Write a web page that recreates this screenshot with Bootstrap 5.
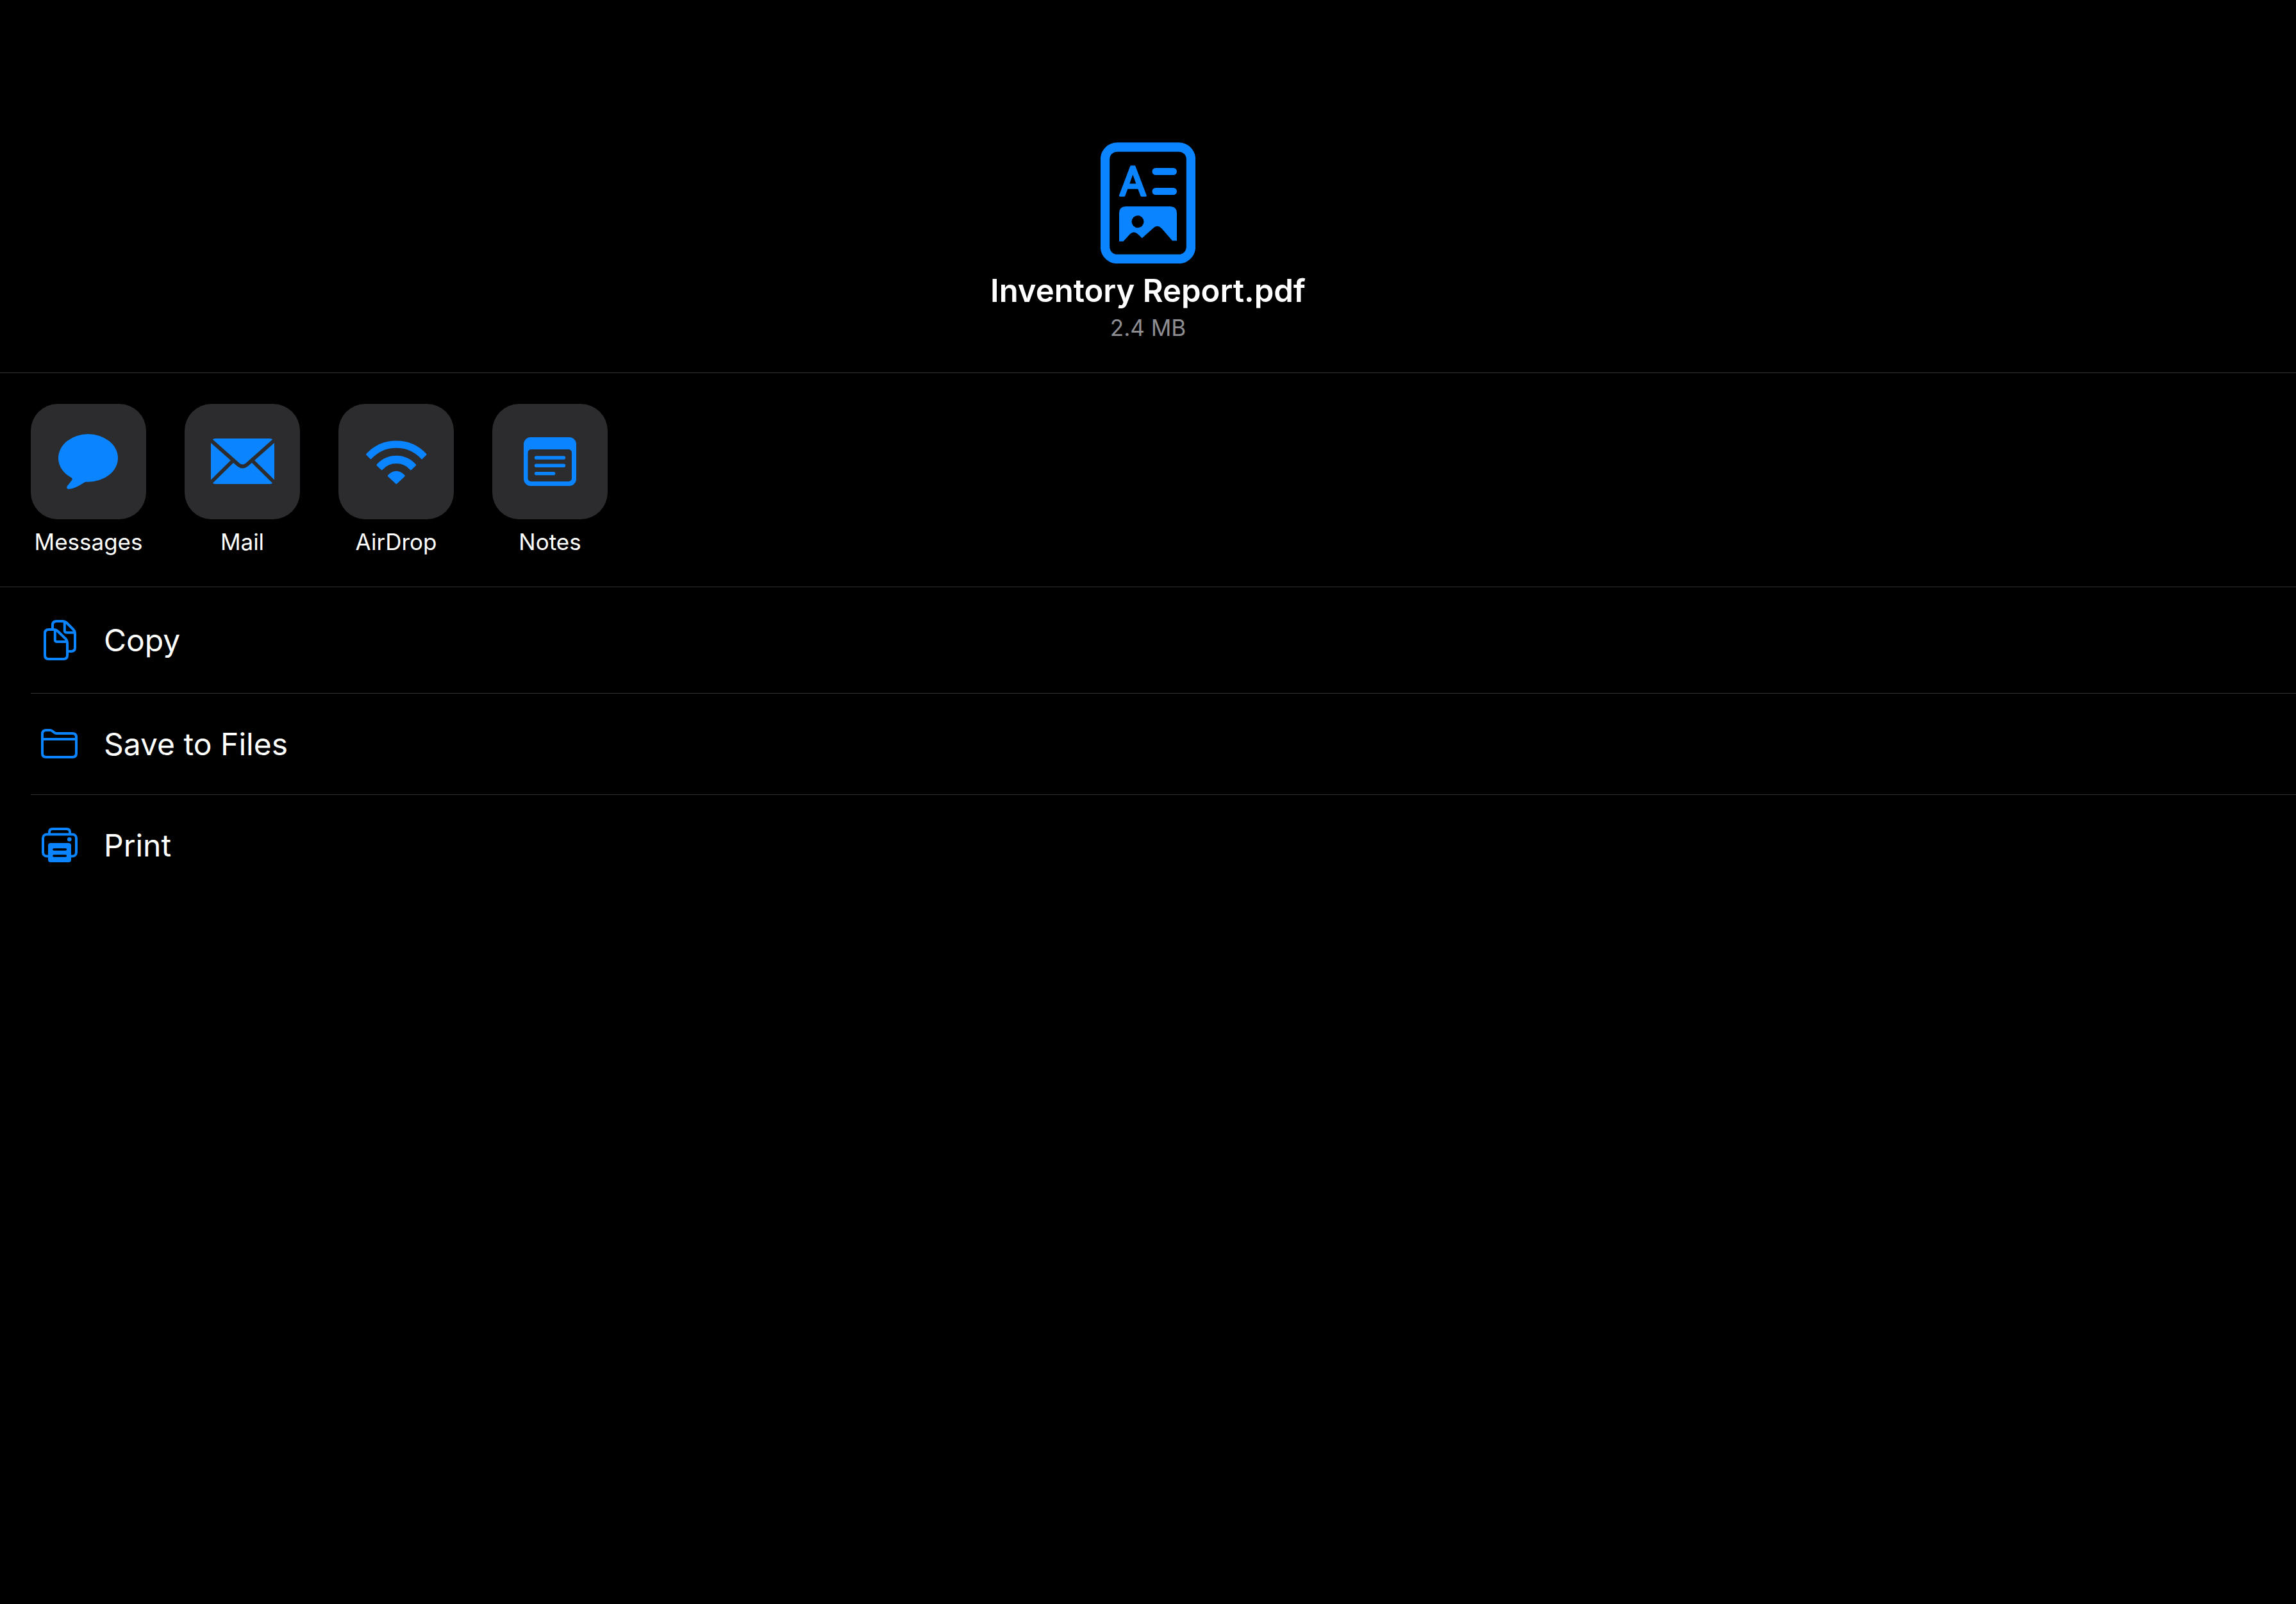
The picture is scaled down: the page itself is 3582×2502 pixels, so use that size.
<!DOCTYPE html>
<html lang="en" data-bs-theme="dark">
<head>
<meta charset="utf-8">
<meta name="viewport" content="width=device-width, initial-scale=1">
<title>Share Inventory Report.pdf</title>
<link href="https://cdn.jsdelivr.net/npm/bootstrap@5.3.0/dist/css/bootstrap.min.css" rel="stylesheet">
<style>
  :root { --accent: #0a84ff; --tile: #2c2c2e; --hairline: #323235; --pad: 48px; }
  body { background: #000; color: #fff; font-family: Inter, "Liberation Sans", sans-serif; }
  svg { display: block; flex: none; }
  .file-head { padding: 222px var(--pad) var(--pad); border-bottom: 1px solid var(--hairline); }
  .file-name { font-size: 49px; line-height: 60px; font-weight: 600; margin: 13px 0 5px; }
  .file-size { font-size: 35px; line-height: 44px; color: #8e8e93; margin: 0; }
  .share-apps { padding: var(--pad); gap: 60px; border-bottom: 1px solid var(--hairline); }
  .app-btn { width: 180px; font-size: 35px; line-height: 44px; gap: 13px; color: #fff; }
  .app-tile { width: 180px; height: 180px; border-radius: 42px; background: var(--tile); }
  .actions { padding-left: var(--pad); }
  .actions li + li { border-top: 1px solid var(--hairline); }
  .action-btn { padding: var(--pad) 0; gap: 24px; font-size: 48px; line-height: 61px; color: #fff; }
  .outline { fill: none; stroke: var(--accent); stroke-width: 4; stroke-linejoin: round; stroke-linecap: butt; }
  .solid { fill: var(--accent); }
</style>
</head>
<body>
<header class="file-head d-flex flex-column align-items-center text-center">
  <svg width="148" height="189" viewBox="0 0 148 189" aria-hidden="true">
    <rect x="7" y="7.500" width="134" height="174.500" rx="19" fill="none" stroke="#0a84ff" stroke-width="14.300"/>
    <text x="50.300" y="83" text-anchor="middle" font-family="Roboto, sans-serif" font-size="63" font-weight="400" fill="#0a84ff" stroke="#0a84ff" stroke-width="3.500" stroke-linejoin="round">A</text>
    <path d="M86 45.500H113.500M86 76.500H113.500" fill="none" stroke="#0a84ff" stroke-width="11" stroke-linecap="round"/>
    <path class="solid" fill-rule="evenodd" d="M29 154.500V111Q29 100 40 100H108Q119 100 119 111V153.500H112L95.500 134.500Q89 127.500 82 134L64.700 149.500L58 143Q52 137.500 46 143L35.500 154.500ZM58 114.200A9.500 9.500 0 1 0 58 133.200A9.500 9.500 0 1 0 58 114.200Z"/>
  </svg>
  <h1 class="file-name">Inventory Report.pdf</h1>
  <p class="file-size">2.4 MB</p>
</header>

<nav class="share-apps d-flex flex-wrap" aria-label="Share with">
  <button type="button" class="app-btn btn p-0 border-0 d-flex flex-column align-items-center">
    <span class="app-tile">
      <svg width="180" height="180" viewBox="0 0 180 180" aria-hidden="true">
        <ellipse class="solid" cx="89.500" cy="84.400" rx="46.500" ry="37.300"/>
        <path class="solid" d="M64 116L65 117.500Q62.500 121.500 57 128Q54.500 132 59 133Q68 133 84.500 122L92 120L70 105Z"/>
      </svg>
    </span>
    <span>Messages</span>
  </button>
  <button type="button" class="app-btn btn p-0 border-0 d-flex flex-column align-items-center">
    <span class="app-tile">
      <svg width="180" height="180" viewBox="0 0 180 180" aria-hidden="true">
        <rect class="solid" x="41" y="54" width="99" height="71" rx="7"/>
        <path d="M40 56L84 95Q90.500 100 97 95L141 56M75 89L40 123.500M106 89L141 123.500" fill="none" stroke="#2c2c2e" stroke-width="5.700"/>
      </svg>
    </span>
    <span>Mail</span>
  </button>
  <button type="button" class="app-btn btn p-0 border-0 d-flex flex-column align-items-center">
    <span class="app-tile">
      <svg width="180" height="180" viewBox="0 0 180 180" aria-hidden="true">
        <path d="M44.600 78.700A62.600 62.600 0 0 1 136 78.700L130 84.600A54.200 54.200 0 0 0 50.600 84.600ZM61 95.300A39.500 39.500 0 0 1 119.600 95.300L113 101.700A30.500 30.500 0 0 0 67.600 101.700ZM78.300 112.200Q83.500 106.200 90.300 106.200T102.300 112.200L90.300 123.500Z" fill="#0a84ff" stroke="#0a84ff" stroke-width="3" stroke-linejoin="round"/>
      </svg>
    </span>
    <span>AirDrop</span>
  </button>
  <button type="button" class="app-btn btn p-0 border-0 d-flex flex-column align-items-center">
    <span class="app-tile">
      <svg width="180" height="180" viewBox="0 0 180 180" aria-hidden="true">
        <rect class="solid" x="49" y="52" width="82" height="76" rx="11"/>
        <rect x="55.500" y="71" width="68.500" height="50" rx="5" fill="#2c2c2e"/>
        <path d="M68.500 84H111.500M68.500 96.300H111.500M68.500 108.600H95.700" fill="none" stroke="#0a84ff" stroke-width="5.400" stroke-linecap="round"/>
      </svg>
    </span>
    <span>Notes</span>
  </button>
</nav>

<main>
  <ul class="actions list-unstyled mb-0">
    <li>
      <button type="button" class="action-btn btn border-0 rounded-0 w-100 d-flex align-items-center text-start">
        <svg width="90" height="69" viewBox="0 0 90 69" aria-hidden="true">
          <g class="outline">
            <path d="M34 16V11Q34 5 40 5H50Q53.500 5 56 7.500L66.500 18Q69 20.500 69 24V46Q69 52 63 52H59"/>
            <path d="M52.800 5V19.500Q52.800 22.700 56 22.700H69"/>
            <path d="M28 18H36Q39.500 18 42 20.500L54.500 32.500Q57 35 57 38.500V58Q57 64 51 64H28Q22 64 22 58V24Q22 18 28 18Z"/>
            <path d="M37.800 18V34Q37.800 37 41 37H57"/>
          </g>
        </svg>
        <span>Copy</span>
      </button>
    </li>
    <li>
      <button type="button" class="action-btn btn border-0 rounded-0 w-100 d-flex align-items-center text-start">
        <svg width="90" height="61" viewBox="0 0 90 61" aria-hidden="true">
          <g class="outline">
            <path d="M18 15Q18 9 24 9H30Q32.500 9 34.500 11L36 12.300Q38 14 40.500 14H65Q71 14 71 20V45Q71 51 65 51H24Q18 51 18 45Z"/>
            <path d="M18 23H71"/>
          </g>
        </svg>
        <span>Save to Files</span>
      </button>
    </li>
    <li>
      <button type="button" class="action-btn btn border-0 rounded-0 w-100 d-flex align-items-center text-start">
        <svg width="90" height="61" viewBox="0 0 90 61" aria-hidden="true">
          <g class="outline">
            <path d="M29 13V10Q29 5 34 5H56Q61 5 61 10V13"/>
            <rect x="19" y="13.500" width="52" height="34" rx="6"/>
          </g>
          <rect class="solid" x="27" y="27" width="36" height="30" rx="4"/>
          <path d="M36 37H54.300M36 47H54.300" fill="none" stroke="#000" stroke-width="3.600" stroke-linecap="round"/>
          <circle class="solid" cx="60.300" cy="21.300" r="3.300"/>
        </svg>
        <span>Print</span>
      </button>
    </li>
  </ul>
</main>
<script src="https://cdn.jsdelivr.net/npm/bootstrap@5.3.0/dist/js/bootstrap.bundle.min.js"></script>
</body>
</html>
